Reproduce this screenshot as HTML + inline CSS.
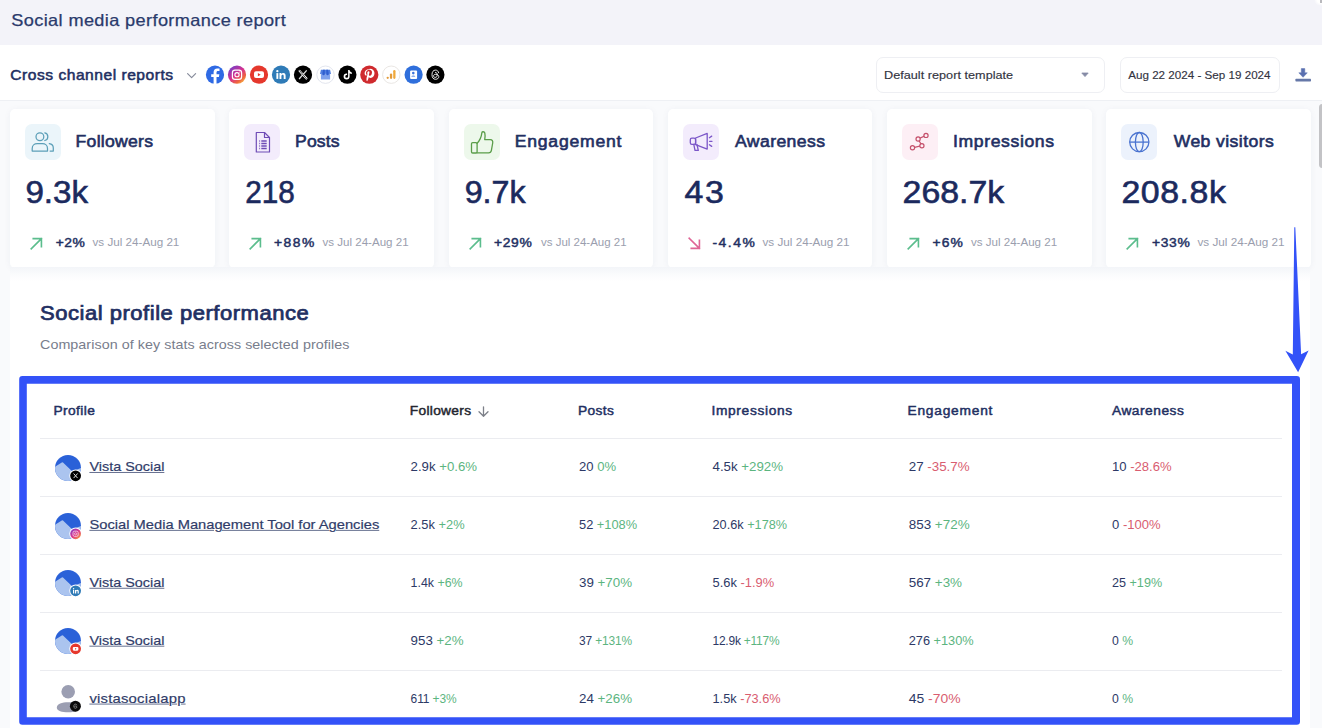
<!DOCTYPE html>
<html>
<head>
<meta charset="utf-8">
<title>Social media performance report</title>
<style>
*{box-sizing:border-box;margin:0;padding:0}
html,body{width:1322px;height:728px;overflow:hidden}
body{font-family:"Liberation Sans",sans-serif;background:#f9fafc;color:#1f2b5b;position:relative}
.abs{position:absolute}
.t{position:absolute;white-space:nowrap;line-height:1;transform-origin:0 0}
#hdr{left:0;top:0;width:1322px;height:45px;background:#f3f3f9}
#bar{left:0;top:45px;width:1322px;height:56px;background:#fff;border-bottom:1px solid #eef0f4}
.box{position:absolute;top:56.5px;height:36.5px;border:1px solid #eeeff3;border-radius:7px;background:#fff}
.card{position:absolute;top:109px;width:204.5px;height:158.5px;background:#fff;border-radius:5px;box-shadow:0 1px 7px rgba(40,50,90,.05)}
.ico{position:absolute;left:15.3px;top:14.5px;width:36px;height:36.5px;border-radius:7px}
.ico svg{position:absolute;left:0;top:0}
.arr{position:absolute;left:20.1px;top:127.8px;width:13px;height:13px}
#panel{left:10px;top:267px;width:1300px;height:470px;background:linear-gradient(#f3f5f9,#fbfcfd 8px,#fff 14px)}
#blue{left:19.2px;top:376px;width:1280.8px;height:348.7px;border:solid #3352f8;border-width:7.8px 8px 7.5px 7.6px;border-radius:3.5px}
.hr{position:absolute;left:40px;width:1242px;height:1px;background:#ebecf0}
.g{color:#5cb57f}
.r{color:#d95d70}
</style>
</head>
<body>
<div id="hdr" class="abs"></div>
<div class="abs" style="left:1314px;top:-6px;width:14px;height:12px;border-radius:50%;background:radial-gradient(closest-side,#fff 55%,rgba(255,255,255,0))"></div>
<div class="abs" style="left:1320px;top:0;width:2px;height:3px;background:#b9b9bd"></div>
<div id="bar" class="abs"></div>
<!-- SOCIAL ICONS -->
<svg class="abs" style="left:204px;top:63px" width="244" height="24" viewBox="204 63 244 24">
<defs>
<linearGradient id="igg" x1="0.15" y1="0.1" x2="0.85" y2="0.95">
<stop offset="0" stop-color="#7a3fc4"/><stop offset="0.45" stop-color="#d6308f"/><stop offset="0.8" stop-color="#f0683a"/><stop offset="1" stop-color="#f7c250"/>
</linearGradient>
</defs>
<!-- facebook -->
<g transform="translate(215,74.7)"><circle r="9.1" fill="#2f6ae4"/><path d="M1.500 9.200V2.400h2.400l.45-2.900H1.500v-1.600c0-.9.4-1.500 1.600-1.500h1.400v-2.500c-.3-.05-1.200-.15-2.200-.15-2.300 0-3.700 1.400-3.700 3.800v1.950h-2.400v2.900h2.400v6.800z" fill="#fff"/></g>
<!-- instagram -->
<g transform="translate(237,74.7)"><circle r="9.1" fill="url(#igg)"/><rect x="-4.6" y="-4.6" width="9.2" height="9.2" rx="2.6" fill="none" stroke="#fff" stroke-width="1.2"/><circle r="2.1" fill="none" stroke="#fff" stroke-width="1.1"/><circle cx="2.7" cy="-2.7" r=".6" fill="#fff"/></g>
<!-- youtube -->
<g transform="translate(259,74.7)"><circle r="9.1" fill="#e5382d"/><rect x="-5" y="-3.4" width="10" height="6.8" rx="2" fill="#fff"/><path d="M-1.1 -1.6L1.7 0L-1.1 1.6z" fill="#e5382d"/></g>
<!-- linkedin -->
<g transform="translate(281,74.7)"><circle r="9.1" fill="#2f7bb7"/><rect x="-4.6" y="-1.6" width="1.9" height="5.8" fill="#fff"/><circle cx="-3.65" cy="-3.5" r="1.15" fill="#fff"/><path d="M-1.5 -1.6h1.8v.8c.4-.6 1.1-1 2-1 1.8 0 2.3 1.1 2.3 2.8v3.2H2.7V1.4c0-.8-.2-1.4-1-1.4-.9 0-1.3.6-1.3 1.500v2.700H-1.500z" fill="#fff"/></g>
<!-- x -->
<g transform="translate(303,74.7)"><circle r="9.1" fill="#000"/><path d="M-3.900 -4.300L3.900 4.300M3.700 -4.300L-3.900 4.300" stroke="#ddd" stroke-width="1.3" fill="none"/><path d="M-3.900 -4.300L3.900 4.300" stroke="#fff" stroke-width="2" fill="none"/><path d="M-3.600 -4.300L3.600 4.300" stroke="#000" stroke-width=".7" fill="none"/></g>
<!-- gmb -->
<g transform="translate(325.500,74.700)"><circle r="8.700" fill="#fff" stroke="#dfe2ec" stroke-width=".9"/><path d="M-4.600 -5h9.200l.9 4.200h-11z" fill="#4f7fe0"/><rect x="-4.600" y="-1" width="9.200" height="5.800" fill="#7fa2ec"/><path d="M-2.400 -5h1.700v4.200a1.200 1.200 0 0 1-2.500 0zM.8 -5h1.700l.8 4.200a1.200 1.200 0 0 1-2.500 0z" fill="#2f5fd0"/></g>
<!-- tiktok -->
<g transform="translate(347.400,74.700)"><circle r="9.100" fill="#000"/><path d="M.7 -4.600h1.500c.1 1.300 .9 2.200 2.200 2.300v1.600c-.8 0-1.600-.3-2.200-.7v3.100a3 3 0 1 1-3-3c.2 0 .3 0 .5.050v1.650a1.400 1.400 0 1 0 1 1.300z" fill="#fff"/></g>
<!-- pinterest -->
<g transform="translate(369.300,74.700)"><circle r="9.100" fill="#cf2a2e"/><path d="M-.2 -5.400c-3 0-4.500 2-4.500 3.900 0 1.100.5 2.100 1.400 2.500.2.100.3 0 .4-.2l.2-.6c0-.2 0-.3-.1-.4-.3-.4-.5-.900-.5-1.500 0-1.900 1.400-3.200 3.300-3.200 1.700 0 2.700 1 2.700 2.500 0 1.900-.8 3.500-2.100 3.500-.7 0-1.200-.6-1-1.300.2-.8.600-1.700.600-2.300 0-.5-.3-1-.9-1-.7 0-1.300.8-1.300 1.800 0 .6.200 1.100.2 1.100l-.9 3.700c-.2 1-.1 2.300 0 3l.5.500c.4-.6 1-1.700 1.200-2.500l.5-1.800c.3.500 1 .9 1.800.9 2.300 0 3.900-2.100 3.900-4.900 0-2.100-1.800-4.200-4.600-4.200z" fill="#fff"/></g>
<!-- analytics -->
<g transform="translate(391.300,74.700)"><circle r="8.700" fill="#fff" stroke="#e6e3e0" stroke-width=".9"/><rect x="1.900" y="-4.600" width="2.300" height="8.800" rx="1.100" fill="#f0a93b"/><rect x="-1.400" y="-1.300" width="2.300" height="5.500" rx="1.100" fill="#e39a38"/><circle cx="-3.600" cy="3.100" r="1.150" fill="#e39a38"/></g>
<!-- blue profile -->
<g transform="translate(413.600,74.700)"><circle r="9.100" fill="#2f6fdc"/><rect x="-3.500" y="-4.300" width="7" height="8.600" rx="1" fill="#fff"/><circle cx="-.3" cy="-1.600" r="1.300" fill="#3c74dc"/><path d="M-2.300 2.300a2 1.800 0 0 1 4 0z" fill="#8fb0ec"/></g>
<!-- threads -->
<g transform="translate(435.400,74.700)"><circle r="9.100" fill="#000"/><path d="M3.300 -1.900c-.4-1.700-1.500-2.700-3.200-2.700-2.200 0-3.500 1.700-3.500 4.600s1.300 4.600 3.500 4.600c1.900 0 3.300-1.100 3.300-2.600 0-1.500-1.200-2.400-3-2.400-1.400 0-2.300.6-2.300 1.600 0 .9.700 1.500 1.700 1.500 1.400 0 2.100-1 2.100-2.700 0-1.300-.6-2.100-1.800-2.300" fill="none" stroke="#e8e8e8" stroke-width="1" stroke-linecap="round"/></g>
</svg>

<div class="box" style="left:876px;width:229px"></div>
<div class="box" style="left:1120px;width:160px"></div>
<!-- CARDS -->
<div class="card" style="left:10.0px"><div class="ico" style="background:#ebf5fa"><svg width="36" height="36" viewBox="0 0 36 36" fill="none" stroke="#5c9fb8" stroke-width="1.25" stroke-linecap="round" stroke-linejoin="round"><circle cx="14.9" cy="12.7" r="3.9"/><path d="M7.200 27v-2.600c0-2.900 2.300-4.800 5-4.800h5.300c2.700 0 5 1.900 5 4.800v2.600z"/><path d="M19.800 8.900a3.900 3.900 0 0 1 0 7.600"/><path d="M24.300 19.700c2.300.300 4 1.900 4 4.300v3h-3.200"/></svg></div><svg class="arr" viewBox="0 0 14 14" fill="none" stroke="#5bbd8d" stroke-width="1.750" stroke-linecap="square"><path d="M1.300 12.700L12.300 1.700M3.500 1.700h8.800v8.800"/></svg></div>
<div class="card" style="left:229.2px"><div class="ico" style="background:#f3ecfc"><svg width="36" height="36" viewBox="0 0 36 36" fill="none" stroke="#6f4cb6" stroke-width="1.200" stroke-linejoin="round"><path d="M12.300 8.500h8.200l5 5v14.500h-13.200z"/><path d="M20.500 8.500v5h5"/><path d="M15.300 17h.8M17.300 17h5.400M15.300 19.500h.8M17.300 19.500h5.400M15.300 22h.8M17.300 22h5.400M15.300 24.500h.8M17.300 24.500h5.400" stroke-width="1.300"/></svg></div><svg class="arr" viewBox="0 0 14 14" fill="none" stroke="#5bbd8d" stroke-width="1.750" stroke-linecap="square"><path d="M1.300 12.700L12.300 1.700M3.500 1.700h8.800v8.800"/></svg></div>
<div class="card" style="left:448.5px"><div class="ico" style="background:#edf8eb"><svg width="36" height="36" viewBox="0 0 36 36" fill="none" stroke="#5a9d49" stroke-width="1.300" stroke-linejoin="round" stroke-linecap="round"><rect x="7.500" y="18.600" width="5.600" height="10.400" rx="1.200"/><path d="M13.100 19.200c2.600-2.400 4.300-6.400 4.800-10.500.2-1.300 2.400-1.300 2.900.3.600 2.200.2 4.700-.1 6.700h5.600c2 0 2.700 1.500 2.400 3.300l-1.300 7.400c-.300 1.600-1.200 2.500-2.800 2.500h-11.500"/></svg></div><svg class="arr" viewBox="0 0 14 14" fill="none" stroke="#5bbd8d" stroke-width="1.750" stroke-linecap="square"><path d="M1.300 12.700L12.300 1.700M3.500 1.700h8.800v8.800"/></svg></div>
<div class="card" style="left:667.7px"><div class="ico" style="background:#f3ecfc"><svg width="36" height="36" viewBox="0 0 36 36" fill="none" stroke="#7b56c8" stroke-width="1.300" stroke-linejoin="round" stroke-linecap="round"><rect x="7.300" y="14.200" width="5.300" height="6.200" rx="1.600"/><path d="M12.600 14l11.600-4.600v15.700l-11.600-4.500z"/><path d="M10.800 20.400l1.200 6h3.300l-1.400-6"/><path d="M26.400 13.700l2.300-1.600M26.600 17.300h2.400M26.400 20.800l2.300 1.600"/></svg></div><svg class="arr" viewBox="0 0 14 14" fill="none" stroke="#df6496" stroke-width="1.750" stroke-linecap="square"><path d="M1.300 1.300L12.300 12.300M3.500 12.300h8.800v-8.800"/></svg></div>
<div class="card" style="left:887.0px"><div class="ico" style="background:#fdeff5"><svg width="36" height="36" viewBox="0 0 36 36" fill="#fdeff5" stroke="#c5506b" stroke-width="1.200"><path d="M24 11.400l-7.900 3.600 3.800 6.700-9.400 2.100" fill="none"/><circle cx="24" cy="11.400" r="2.100"/><circle cx="16.100" cy="15" r="2.100"/><circle cx="19.900" cy="21.700" r="2.100"/><circle cx="10.500" cy="23.800" r="2.100"/></svg></div><svg class="arr" viewBox="0 0 14 14" fill="none" stroke="#5bbd8d" stroke-width="1.750" stroke-linecap="square"><path d="M1.300 12.700L12.300 1.700M3.500 1.700h8.800v8.800"/></svg></div>
<div class="card" style="left:1106.2px"><div class="ico" style="background:#ecf2fc"><svg width="36" height="36" viewBox="0 0 36 36" fill="none" stroke="#4a73d0" stroke-width="1.300"><circle cx="18.300" cy="18.100" r="9.600"/><ellipse cx="18.300" cy="18.100" rx="3.900" ry="9.600"/><path d="M8.700 18.100h19.200"/></svg></div><svg class="arr" viewBox="0 0 14 14" fill="none" stroke="#5bbd8d" stroke-width="1.750" stroke-linecap="square"><path d="M1.300 12.700L12.300 1.700M3.500 1.700h8.800v8.800"/></svg></div>
<!-- PANEL -->
<div id="panel" class="abs"></div>
<div class="hr" style="top:438.4px"></div>
<div class="hr" style="top:496.3px"></div>
<div class="hr" style="top:554.2px"></div>
<div class="hr" style="top:612.1px"></div>
<div class="hr" style="top:670.0px"></div>
<svg class="abs" style="left:53px;top:452.6px" width="32" height="32" viewBox="-15 -15 32 32">
<defs><clipPath id="c467"><circle r="13"/></clipPath></defs>
<circle r="13" fill="#2a61d8"/>
<path clip-path="url(#c467)" d="M-14 -.600L-6.200 -5.600Q-5.600 -5.900 -5 -5.400L3.600 2.800Q4.300 3.300 5.200 3L14 -.4V14H-14z" fill="#abc4ef"/>
<circle cx="7.600" cy="7.800" r="6.300" fill="#fff"/>
<circle cx="7.600" cy="7.800" r="5.400" fill="#000"/><path d="M5.600 5.500l4 4.600M9.600 5.500l-4 4.600" stroke="#ddd" stroke-width="1" fill="none"/>
</svg>
<svg class="abs" style="left:53px;top:510.5px" width="32" height="32" viewBox="-15 -15 32 32">
<defs><clipPath id="c525"><circle r="13"/></clipPath></defs>
<circle r="13" fill="#2a61d8"/>
<path clip-path="url(#c525)" d="M-14 -.600L-6.200 -5.600Q-5.600 -5.900 -5 -5.400L3.600 2.800Q4.300 3.300 5.200 3L14 -.4V14H-14z" fill="#abc4ef"/>
<circle cx="7.600" cy="7.800" r="6.300" fill="#fff"/>
<defs><linearGradient id="igb" x1="0.1" y1="0.1" x2="0.9" y2="0.95"><stop offset="0" stop-color="#8a3fc4"/><stop offset="0.5" stop-color="#e0358a"/><stop offset="1" stop-color="#f5a13c"/></linearGradient></defs><circle cx="7.600" cy="7.800" r="5.400" fill="url(#igb)"/><rect x="5" y="5.200" width="5.200" height="5.200" rx="1.500" fill="none" stroke="#f6d9e8" stroke-width=".8"/><circle cx="7.600" cy="7.800" r="1.100" fill="none" stroke="#f6d9e8" stroke-width=".7"/>
</svg>
<svg class="abs" style="left:53px;top:568.4px" width="32" height="32" viewBox="-15 -15 32 32">
<defs><clipPath id="c583"><circle r="13"/></clipPath></defs>
<circle r="13" fill="#2a61d8"/>
<path clip-path="url(#c583)" d="M-14 -.600L-6.200 -5.600Q-5.600 -5.900 -5 -5.400L3.600 2.800Q4.300 3.300 5.200 3L14 -.4V14H-14z" fill="#abc4ef"/>
<circle cx="7.600" cy="7.800" r="6.300" fill="#fff"/>
<circle cx="7.600" cy="7.800" r="5.400" fill="#2f7bb7"/><path d="M5 6.900h1.200v3.600H5zM5.600 5a.7.700 0 1 1 0 1.400.7.700 0 0 1 0-1.400zM7 6.900h1.100v.5c.3-.4.700-.6 1.300-.6 1.100 0 1.400.7 1.400 1.700v2h-1.200V8.800c0-.5-.1-.9-.6-.9s-.8.400-.8.900v1.700H7z" fill="#fff"/>
</svg>
<svg class="abs" style="left:53px;top:626.3px" width="32" height="32" viewBox="-15 -15 32 32">
<defs><clipPath id="c641"><circle r="13"/></clipPath></defs>
<circle r="13" fill="#2a61d8"/>
<path clip-path="url(#c641)" d="M-14 -.600L-6.200 -5.600Q-5.600 -5.900 -5 -5.400L3.600 2.800Q4.300 3.300 5.200 3L14 -.4V14H-14z" fill="#abc4ef"/>
<circle cx="7.600" cy="7.800" r="6.300" fill="#fff"/>
<circle cx="7.600" cy="7.800" r="5.400" fill="#e5382d"/><rect x="4.800" y="5.900" width="5.600" height="3.800" rx="1.100" fill="#fff"/><path d="M7 6.900l1.600.9-1.600.9z" fill="#e5382d"/>
</svg>
<svg class="abs" style="left:53px;top:682.8px" width="32" height="32" viewBox="-15 -15 32 32">
<circle cx=".2" cy="-6.200" r="6.800" fill="#9b9eb2"/>
<path d="M-11.200 9.700C-11.200 6 -6 4.300 .2 4.300S11.600 6 11.600 9.700C11.600 12.800 6.500 14.300 .2 14.300S-11.200 12.800 -11.200 9.700z" fill="#9b9eb2"/>
<circle cx="7.400" cy="8.200" r="5.500" fill="#0a0a0a"/>
<path d="M8.900 7.300c-.2-.8-.7-1.200-1.500-1.200-1 0-1.600.8-1.600 2.100s.6 2.100 1.600 2.100c.9 0 1.500-.5 1.500-1.200s-.5-1.100-1.400-1.100c-.6 0-1 .3-1 .7" fill="none" stroke="#bbb" stroke-width=".6"/>
</svg>
<!-- chevron / caret / download / sort -->
<svg class="abs" style="left:186px;top:70px" width="12" height="10" viewBox="0 0 12 10" fill="none" stroke="#858a9a" stroke-width="1.150" stroke-linecap="round" stroke-linejoin="round"><path d="M1.600 3.600l4 4L9.600 3.600"/></svg>
<svg class="abs" style="left:1080px;top:72px" width="10" height="6" viewBox="0 0 10 6"><path d="M1.800 1h6.400L5 4.600z" fill="#858ba6" stroke="#858ba6" stroke-width=".8" stroke-linejoin="round"/></svg>
<svg class="abs" style="left:1294px;top:66px" width="18" height="18" viewBox="0 0 18 18" fill="#5a70b0"><path d="M7.300 2.600h3.500v4.200h2.500L9.050 11.300 4.800 6.800h2.500z" stroke="#5a70b0" stroke-width=".5" stroke-linejoin="round"/><rect x="1.400" y="12.700" width="15.600" height="2.700" rx=".7" fill="#6678a8"/></svg>
<svg class="abs" style="left:477px;top:404px" width="13" height="14" viewBox="0 0 13 14" fill="none" stroke="#7d8089" stroke-width="1.300" stroke-linecap="round" stroke-linejoin="round"><path d="M6.500 2.800v9.300M2 7.700l4.500 4.500L11 7.700"/></svg>
<!-- TEXT -->
<div class="t" style="left:11px;top:12px;font-size:16.5px;letter-spacing:0.34px;color:#2a3a6c;transform:translate(0.30px,0.03px) scaleX(1.100);-webkit-text-stroke:0.25px #2a3a6c">Social media performance report</div>
<div class="t" style="left:10px;top:67px;font-size:14.2px;letter-spacing:0.46px;color:#222f62;transform:translate(0.30px,0.98px) scaleX(1.100);-webkit-text-stroke:0.51px #222f62">Cross channel reports</div>
<div class="t" style="left:884px;top:69px;font-size:11.5px;letter-spacing:0.02px;color:#33343f;transform:translate(0.00px,0.57px) scaleX(1.100);-webkit-text-stroke:0.15px #33343f">Default report template</div>
<div class="t" style="left:1128px;top:69px;font-size:11.5px;letter-spacing:0.00px;color:#33343f;transform:translate(0.20px,0.57px) scaleX(1.012);-webkit-text-stroke:0.15px #33343f">Aug 22 2024 - Sep 19 2024</div>
<div class="t" style="left:75px;top:133px;font-size:16px;letter-spacing:0.24px;color:#222f62;transform:translate(0.60px,0.66px) scaleX(1.100);-webkit-text-stroke:0.58px #222f62">Followers</div>
<div class="t" style="left:295px;top:133px;font-size:16px;letter-spacing:0.09px;color:#222f62;transform:translate(0.10px,0.66px) scaleX(1.100);-webkit-text-stroke:0.58px #222f62">Posts</div>
<div class="t" style="left:514px;top:133px;font-size:16px;letter-spacing:0.70px;color:#222f62;transform:translate(0.70px,0.66px) scaleX(1.100);-webkit-text-stroke:0.58px #222f62">Engagement</div>
<div class="t" style="left:735px;top:133px;font-size:16px;letter-spacing:0.37px;color:#222f62;transform:translate(0.00px,0.66px) scaleX(1.100);-webkit-text-stroke:0.58px #222f62">Awareness</div>
<div class="t" style="left:953px;top:133px;font-size:16px;letter-spacing:0.55px;color:#222f62;transform:translate(0.10px,0.66px) scaleX(1.100);-webkit-text-stroke:0.58px #222f62">Impressions</div>
<div class="t" style="left:1173px;top:133px;font-size:16px;letter-spacing:0.37px;color:#222f62;transform:translate(0.70px,0.66px) scaleX(1.100);-webkit-text-stroke:0.58px #222f62">Web visitors</div>
<div class="t" style="left:25px;top:177px;font-size:30.8px;letter-spacing:0.00px;color:#1b2a5e;transform:translate(0.42px,0.63px) scaleX(1.076);-webkit-text-stroke:0.6px #1b2a5e">9.3k</div>
<div class="t" style="left:245px;top:177px;font-size:30.8px;letter-spacing:0.00px;color:#1b2a5e;transform:translate(0.24px,0.63px) scaleX(0.964);-webkit-text-stroke:0.6px #1b2a5e">218</div>
<div class="t" style="left:464px;top:177px;font-size:30.8px;letter-spacing:0.00px;color:#1b2a5e;transform:translate(0.65px,0.63px) scaleX(1.046);-webkit-text-stroke:0.6px #1b2a5e">9.7k</div>
<div class="t" style="left:684px;top:177px;font-size:30.8px;letter-spacing:1.42px;color:#1b2a5e;transform:translate(0.50px,0.63px) scaleX(1.100);-webkit-text-stroke:0.6px #1b2a5e">43</div>
<div class="t" style="left:902px;top:177px;font-size:30.8px;letter-spacing:0.00px;color:#1b2a5e;transform:translate(0.60px,0.63px) scaleX(1.100);-webkit-text-stroke:0.6px #1b2a5e">268.7k</div>
<div class="t" style="left:1121px;top:177px;font-size:30.8px;letter-spacing:0.50px;color:#1b2a5e;transform:translate(0.40px,0.63px) scaleX(1.100);-webkit-text-stroke:0.6px #1b2a5e">208.8k</div>
<div class="t" style="left:55px;top:236px;font-size:12.6px;letter-spacing:0.41px;color:#222f62;transform:translate(0.70px,0.93px) scaleX(1.100);-webkit-text-stroke:0.45px #222f62">+2%</div>
<div class="t" style="left:274px;top:236px;font-size:12.6px;letter-spacing:1.33px;color:#222f62;transform:translate(0.00px,0.93px) scaleX(1.100);-webkit-text-stroke:0.45px #222f62">+88%</div>
<div class="t" style="left:494px;top:236px;font-size:12.6px;letter-spacing:0.58px;color:#222f62;transform:translate(0.00px,0.93px) scaleX(1.100);-webkit-text-stroke:0.45px #222f62">+29%</div>
<div class="t" style="left:712px;top:236px;font-size:12.6px;letter-spacing:1.37px;color:#222f62;transform:translate(0.50px,0.93px) scaleX(1.100);-webkit-text-stroke:0.45px #222f62">-4.4%</div>
<div class="t" style="left:932px;top:236px;font-size:12.6px;letter-spacing:0.96px;color:#222f62;transform:translate(0.50px,0.93px) scaleX(1.100);-webkit-text-stroke:0.45px #222f62">+6%</div>
<div class="t" style="left:1152px;top:236px;font-size:12.6px;letter-spacing:0.58px;color:#222f62;transform:translate(0.00px,0.93px) scaleX(1.100);-webkit-text-stroke:0.45px #222f62">+33%</div>
<div class="t" style="left:92px;top:237px;font-size:11px;letter-spacing:-0.00px;color:#9a9eae;transform:translate(0.50px,0.29px) scaleX(1.060)">vs Jul 24-Aug 21</div>
<div class="t" style="left:322px;top:237px;font-size:11px;letter-spacing:0.00px;color:#9a9eae;transform:translate(0.50px,0.29px) scaleX(1.051)">vs Jul 24-Aug 21</div>
<div class="t" style="left:541px;top:237px;font-size:11px;letter-spacing:0.00px;color:#9a9eae;transform:translate(0.00px,0.29px) scaleX(1.045)">vs Jul 24-Aug 21</div>
<div class="t" style="left:762px;top:237px;font-size:11px;letter-spacing:0.00px;color:#9a9eae;transform:translate(0.50px,0.29px) scaleX(1.063)">vs Jul 24-Aug 21</div>
<div class="t" style="left:971px;top:237px;font-size:11px;letter-spacing:0.00px;color:#9a9eae;transform:translate(0.00px,0.29px) scaleX(1.051)">vs Jul 24-Aug 21</div>
<div class="t" style="left:1197px;top:237px;font-size:11px;letter-spacing:0.00px;color:#9a9eae;transform:translate(0.50px,0.29px) scaleX(1.063)">vs Jul 24-Aug 21</div>
<div class="t" style="left:40px;top:303px;font-size:20px;letter-spacing:0.48px;color:#222f62;transform:translate(0.00px,0.07px) scaleX(1.100);-webkit-text-stroke:0.72px #222f62">Social profile performance</div>
<div class="t" style="left:40px;top:338px;font-size:13px;letter-spacing:0.05px;color:#787d8c;transform:translate(0.00px,0.20px) scaleX(1.100)">Comparison of key stats across selected profiles</div>
<div class="t" style="left:53px;top:405px;font-size:12.5px;letter-spacing:0.39px;color:#222f62;transform:translate(0.40px,0.32px) scaleX(1.100);-webkit-text-stroke:0.45px #222f62">Profile</div>
<div class="t" style="left:409px;top:405px;font-size:12.5px;letter-spacing:0.29px;color:#23262f;transform:translate(0.70px,0.32px) scaleX(1.100);-webkit-text-stroke:0.45px #23262f">Followers</div>
<div class="t" style="left:577px;top:405px;font-size:12.5px;letter-spacing:0.34px;color:#222f62;transform:translate(0.90px,0.32px) scaleX(1.100);-webkit-text-stroke:0.45px #222f62">Posts</div>
<div class="t" style="left:711px;top:405px;font-size:12.5px;letter-spacing:0.61px;color:#222f62;transform:translate(0.40px,0.32px) scaleX(1.100);-webkit-text-stroke:0.45px #222f62">Impressions</div>
<div class="t" style="left:907px;top:405px;font-size:12.5px;letter-spacing:0.70px;color:#222f62;transform:translate(0.50px,0.32px) scaleX(1.100);-webkit-text-stroke:0.45px #222f62">Engagement</div>
<div class="t" style="left:1112px;top:405px;font-size:12.5px;letter-spacing:0.46px;color:#222f62;transform:translate(0.00px,0.32px) scaleX(1.100);-webkit-text-stroke:0.45px #222f62">Awareness</div>
<div class="t" style="left:89px;top:459px;font-size:13.5px;letter-spacing:0.00px;color:#303c69;transform:translate(0.40px,0.97px) scaleX(1.066);text-decoration:underline;text-decoration-thickness:1.3px;text-underline-offset:0.8px;text-decoration-color:#66708f;-webkit-text-stroke:0.2px #303c69">Vista Social</div>
<div class="t" style="left:410px;top:459px;font-size:13px;letter-spacing:0.00px;color:#2d3966;transform:translate(0.60px,1.00px) scaleX(1.016)">2.9k <span class="g">+0.6%</span></div>
<div class="t" style="left:579px;top:459px;font-size:13px;letter-spacing:0.00px;color:#2d3966;transform:translate(0.00px,1.00px) scaleX(1.005)">20 <span class="g">0%</span></div>
<div class="t" style="left:712px;top:459px;font-size:13px;letter-spacing:0.00px;color:#2d3966;transform:translate(0.50px,1.00px) scaleX(1.022)">4.5k <span class="g">+292%</span></div>
<div class="t" style="left:908px;top:459px;font-size:13px;letter-spacing:0.00px;color:#2d3966;transform:translate(0.70px,1.00px) scaleX(1.027)">27 <span class="r">-35.7%</span></div>
<div class="t" style="left:1112px;top:459px;font-size:13px;letter-spacing:-0.00px;color:#2d3966;transform:translate(0.00px,1.00px) scaleX(1.005)">10 <span class="r">-28.6%</span></div>
<div class="t" style="left:89px;top:517px;font-size:13.5px;letter-spacing:0.00px;color:#303c69;transform:translate(0.40px,0.87px) scaleX(1.089);text-decoration:underline;text-decoration-thickness:1.3px;text-underline-offset:0.8px;text-decoration-color:#66708f;-webkit-text-stroke:0.2px #303c69">Social Media Management Tool for Agencies</div>
<div class="t" style="left:410px;top:517px;font-size:13px;letter-spacing:0.00px;color:#2d3966;transform:translate(0.60px,0.90px) scaleX(0.989)">2.5k <span class="g">+2%</span></div>
<div class="t" style="left:579px;top:517px;font-size:13px;letter-spacing:0.00px;color:#2d3966;transform:translate(0.00px,0.90px) scaleX(0.986)">52 <span class="g">+108%</span></div>
<div class="t" style="left:712px;top:517px;font-size:13px;letter-spacing:0.00px;color:#2d3966;transform:translate(0.50px,0.90px) scaleX(0.978)">20.6k <span class="g">+178%</span></div>
<div class="t" style="left:908px;top:517px;font-size:13px;letter-spacing:0.00px;color:#2d3966;transform:translate(0.70px,0.90px) scaleX(1.033)">853 <span class="g">+72%</span></div>
<div class="t" style="left:1112px;top:517px;font-size:13px;letter-spacing:0.00px;color:#2d3966;transform:translate(0.00px,0.90px) scaleX(1.003)">0 <span class="r">-100%</span></div>
<div class="t" style="left:89px;top:575px;font-size:13.5px;letter-spacing:0.00px;color:#303c69;transform:translate(0.40px,0.77px) scaleX(1.066);text-decoration:underline;text-decoration-thickness:1.3px;text-underline-offset:0.8px;text-decoration-color:#66708f;-webkit-text-stroke:0.2px #303c69">Vista Social</div>
<div class="t" style="left:410px;top:575px;font-size:13px;letter-spacing:0.00px;color:#2d3966;transform:translate(0.60px,0.80px) scaleX(0.953)">1.4k <span class="g">+6%</span></div>
<div class="t" style="left:579px;top:575px;font-size:13px;letter-spacing:0.00px;color:#2d3966;transform:translate(0.00px,0.80px) scaleX(1.026)">39 <span class="g">+70%</span></div>
<div class="t" style="left:712px;top:575px;font-size:13px;letter-spacing:0.00px;color:#2d3966;transform:translate(0.50px,0.80px) scaleX(0.991)">5.6k <span class="r">-1.9%</span></div>
<div class="t" style="left:908px;top:575px;font-size:13px;letter-spacing:0.00px;color:#2d3966;transform:translate(0.70px,0.80px) scaleX(1.032)">567 <span class="g">+3%</span></div>
<div class="t" style="left:1112px;top:575px;font-size:13px;letter-spacing:0.00px;color:#2d3966;transform:translate(0.00px,0.80px) scaleX(0.969)">25 <span class="g">+19%</span></div>
<div class="t" style="left:89px;top:633px;font-size:13.5px;letter-spacing:0.00px;color:#303c69;transform:translate(0.40px,0.67px) scaleX(1.066);text-decoration:underline;text-decoration-thickness:1.3px;text-underline-offset:0.8px;text-decoration-color:#66708f;-webkit-text-stroke:0.2px #303c69">Vista Social</div>
<div class="t" style="left:410px;top:633px;font-size:13px;letter-spacing:0.00px;color:#2d3966;transform:translate(0.60px,0.70px) scaleX(1.024)">953 <span class="g">+2%</span></div>
<div class="t" style="left:579px;top:633px;font-size:13px;letter-spacing:-0.17px;color:#2d3966;transform:translate(0.00px,0.70px) scaleX(0.920)">37 <span class="g">+131%</span></div>
<div class="t" style="left:712px;top:633px;font-size:13px;letter-spacing:-0.24px;color:#2d3966;transform:translate(0.50px,0.70px) scaleX(0.920)">12.9k <span class="g">+117%</span></div>
<div class="t" style="left:908px;top:633px;font-size:13px;letter-spacing:0.00px;color:#2d3966;transform:translate(0.70px,0.70px) scaleX(0.981)">276 <span class="g">+130%</span></div>
<div class="t" style="left:1112px;top:633px;font-size:13px;letter-spacing:0.00px;color:#2d3966;transform:translate(0.00px,0.70px) scaleX(0.941)">0 <span class="g">%</span></div>
<div class="t" style="left:89px;top:691px;font-size:13.5px;letter-spacing:0.19px;color:#303c69;transform:translate(0.40px,0.57px) scaleX(1.100);text-decoration:underline;text-decoration-thickness:1.3px;text-underline-offset:0.8px;text-decoration-color:#66708f;-webkit-text-stroke:0.2px #303c69">vistasocialapp</div>
<div class="t" style="left:410px;top:691px;font-size:13px;letter-spacing:-0.12px;color:#2d3966;transform:translate(0.60px,0.60px) scaleX(0.920)">611 <span class="g">+3%</span></div>
<div class="t" style="left:579px;top:691px;font-size:13px;letter-spacing:0.00px;color:#2d3966;transform:translate(0.00px,0.60px) scaleX(1.026)">24 <span class="g">+26%</span></div>
<div class="t" style="left:712px;top:691px;font-size:13px;letter-spacing:0.00px;color:#2d3966;transform:translate(0.50px,0.60px) scaleX(0.981)">1.5k <span class="r">-73.6%</span></div>
<div class="t" style="left:908px;top:691px;font-size:13px;letter-spacing:0.00px;color:#2d3966;transform:translate(0.70px,0.60px) scaleX(1.070)">45 <span class="r">-70%</span></div>
<div class="t" style="left:1112px;top:691px;font-size:13px;letter-spacing:0.00px;color:#2d3966;transform:translate(0.00px,0.60px) scaleX(0.941)">0 <span class="g">%</span></div>
<svg class="abs" style="left:0;top:224px" width="1322" height="504" viewBox="0 224 1322 504"><path fill-rule="evenodd" fill="#3352f8" d="M22.400 376H1296.800Q1300 376 1300 379.200V721.500Q1300 724.700 1296.800 724.700H22.400Q19.200 724.700 19.200 721.500V379.200Q19.200 376 22.400 376zM26.800 383.800V717.200H1292V383.800z"/><path d="M1294.300 227.300L1295.300 227.300L1301.100 354.200L1308.600 350.500L1298.100 372.300L1285.400 350.800L1292.800 354.500z" fill="#3352f8"/></svg>
<div class="abs" style="left:1318.500px;top:103.5px;width:8px;height:64px;border-radius:3.500px;background:#c3c3c6"></div>

</body>
</html>
